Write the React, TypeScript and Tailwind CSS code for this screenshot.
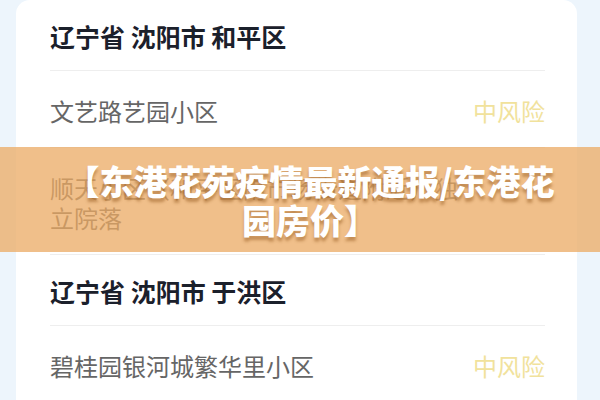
import React from "react";

type Place = { name: string; level?: string };

type Area = {
  region: string;
  places: Place[];
};

const areas: Area[] = [
  {
    region: "辽宁省 沈阳市 和平区",
    places: [
      { name: "文艺路艺园小区", level: "中风险" },
      { name: "顺天小区（和平区南市场街道附近）独立院落" },
    ],
  },
  {
    region: "辽宁省 沈阳市 于洪区",
    places: [{ name: "碧桂园银河城繁华里小区", level: "中风险" }],
  },
];

function AreaBlock({ area }: { area: Area }) {
  return (
    <div>
      <div className="flex h-[71px] items-center border-b border-[#eeeeee] pt-[4px] text-[25px] font-bold text-[#1b202b]">
        {area.region}
      </div>
      {area.places.map((p) => (
        <div
          key={p.name}
          className="flex items-center justify-between gap-4 border-b border-[#eeeeee] pb-[21px] pt-[25px]"
        >
          <span className="max-w-[425px] text-[24px] leading-[30px] text-[#666666]">
            {p.name}
          </span>
          {p.level && (
            <span className="shrink-0 text-[24px] leading-[30px] text-[#f1e29c]">
              {p.level}
            </span>
          )}
        </div>
      ))}
    </div>
  );
}

export default function App() {
  return (
    <div className="relative h-[400px] w-[600px] overflow-hidden bg-[#edf5fc] font-['Noto_Sans_CJK_SC',sans-serif]">
      <div className="ml-[16px] w-[561px] rounded-t-[14px] bg-white pl-[34px] pr-[32px]">
        {areas.map((a) => (
          <AreaBlock key={a.region} area={a} />
        ))}
      </div>

      {/* title banner laid over the list */}
      <div className="absolute left-0 right-0 top-[147px] flex h-[105px] items-center bg-[rgba(235,170,99,0.75)] pl-[60px] pr-[40px]">
        <h1 className="w-full text-center text-[34px] font-black leading-[39px] text-white [text-shadow:0_4px_3px_rgba(140,80,20,0.45)]">
          【东港花苑疫情最新通报/东港花园房价】
        </h1>
      </div>
    </div>
  );
}
